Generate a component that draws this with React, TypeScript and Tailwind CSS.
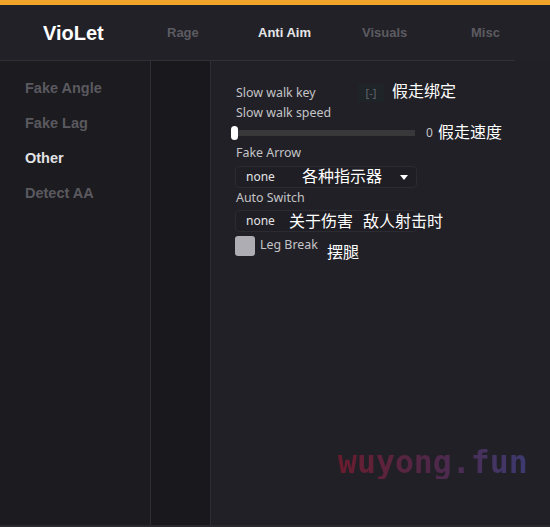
import React from 'react';

const tabs = [
  { label: 'Rage', x: 'w-[91px]', active: false },
  { label: 'Anti Aim', x: 'w-[104px]', active: true },
  { label: 'Visuals', x: 'w-[109px]', active: false },
  { label: 'Misc', x: 'w-[60px]', active: false },
];

const sideItems = ['Fake Angle', 'Fake Lag', 'Other', 'Detect AA'];

const Label = ({ text }: { text: string }) => (
  <div className="h-[20px] flex items-center text-[12.4px] text-[#c4c4c8]">{text}</div>
);

const Select = ({ value, arrow }: { value: string; arrow?: boolean }) => (
  <div className="w-[182px] h-[22px] flex items-center justify-between px-[10px] rounded-[4px] border border-[#2c2b31] bg-[#1f1e24] text-[12px] text-[#e4e4e6]">
    <span>{value}</span>
    {arrow && (
      <svg width="8" height="5" viewBox="0 0 8 5" className="mr-[-2px]">
        <path d="M0 0h8L4 5z" fill="#ffffff" />
      </svg>
    )}
  </div>
);

const Note = ({ text, className }: { text: string; className: string }) => (
  <span
    className={`absolute text-[16px] leading-none text-white whitespace-nowrap ${className}`}
    style={{ fontFamily: '"Noto Sans CJK SC", sans-serif' }}
  >
    {text}
  </span>
);

export default function App() {
  return (
    <div
      className="w-[550px] h-[527px] flex flex-col bg-[#212026] border-t-[5px] border-[#f0a52a] border-b-2 border-b-[#2a292e] overflow-hidden"
      style={{ fontFamily: '"Liberation Sans", Arial, sans-serif' }}
    >
      {/* header */}
      <div className="h-[55px] flex items-center bg-[#222127] shrink-0">
        <div className="w-[150px] pl-[43px] text-[20px] font-bold text-white">VioLet</div>
        <div className="flex items-center pl-[17px] pt-[1px]">
          {tabs.map((t) => (
            <div
              key={t.label}
              className={`${t.x} text-[13px] font-bold ${t.active ? 'text-[#e6e6e8]' : 'text-[#5c5b61]'}`}
            >
              {t.label}
            </div>
          ))}
        </div>
      </div>
      <div className="flex">
        <div className="w-[515px] h-px bg-[#302f35]" />
      </div>

      {/* body */}
      <div className="flex flex-1">
        <div className="w-[151px] bg-[#1c1b20] border-r border-[#2e2d33] pt-[10px] pl-[25px]">
          {sideItems.map((s) => (
            <div
              key={s}
              className={`h-[35px] flex items-center text-[14.5px] font-bold ${s === 'Other' ? 'text-[#e2e2e4]' : 'text-[#5a595f]'}`}
            >
              {s}
            </div>
          ))}
        </div>
        <div className="w-[60px] bg-[#19181d] border-r border-[#2e2d33]" />
        <div
          className="relative flex-1 bg-[#212026] pt-[22px] pl-[25px]"
          style={{ fontFamily: '"Noto Sans", sans-serif' }}
        >
          <div className="flex items-center h-[20px]">
            <div className="w-[122px] text-[12.4px] text-[#c4c4c8]">Slow walk key</div>
            <div className="w-[26px] h-[18px] flex items-center justify-center bg-[#1f2429] text-[11px] text-[#5f666b]">
              [-]
            </div>
          </div>
          <Label text="Slow walk speed" />
          <div className="h-[20px] flex items-center ml-[-3px]">
            <div className="relative w-[182px] h-[6px] bg-[#38383b]">
              <div className="absolute left-[-2px] top-[-4px] w-[7px] h-[14px] rounded-full bg-white" />
            </div>
            <span className="ml-[11px] text-[12px] text-[#c4c4c8]">0</span>
          </div>
          <Label text="Fake Arrow" />
          <div className="mt-[3px] ml-[-1px]">
            <Select value="none" arrow />
          </div>
          <Label text="Auto Switch" />
          <div className="mt-[2px] ml-[-1px]">
            <Select value="none" />
          </div>
          <div className="mt-[4px] ml-[-1px] flex items-center">
            <div className="w-[20px] h-[20px] rounded-[3px] bg-[#aeadb3]" />
            <span className="ml-[5px] mt-[-2px] text-[12.4px] text-[#c4c4c8]">Leg Break</span>
          </div>

          <Note text="假走绑定" className="left-[181px] top-[21px]" />
          <Note text="假走速度" className="left-[227px] top-[62px]" />
          <Note text="各种指示器" className="left-[91px] top-[106px]" />
          <Note text="关于伤害" className="left-[78px] top-[151px]" />
          <Note text="敌人射击时" className="left-[152px] top-[151px]" />
          <Note text="摆腿" className="left-[116px] top-[182px]" />

          <span
            className="absolute left-[127px] top-[386px] text-[31.5px] font-bold leading-none bg-gradient-to-r from-[#6a1b2d] via-[#4f2749] to-[#3c3a70] bg-clip-text text-transparent"
            style={{ fontFamily: '"DejaVu Sans Mono", monospace' }}
          >
            wuyong.fun
          </span>
        </div>
      </div>
    </div>
  );
}
